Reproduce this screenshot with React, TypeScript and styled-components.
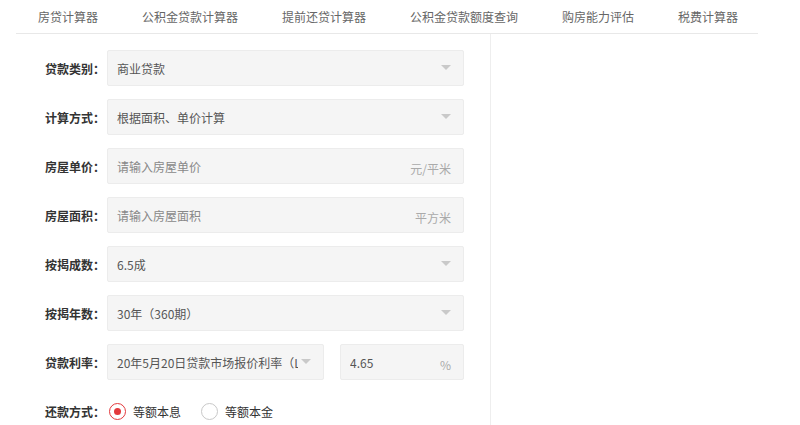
import styled, { createGlobalStyle } from "styled-components";

const GlobalStyle = createGlobalStyle`
  html, body {
    margin: 0;
    padding: 0;
    background: #fff;
    font-family: "Noto Sans CJK SC", "Noto Sans", sans-serif;
    font-size: 12px;
  }
`;

const tabs = [
  "房贷计算器",
  "公积金贷款计算器",
  "提前还贷计算器",
  "公积金贷款额度查询",
  "购房能力评估",
  "税费计算器",
];

type Field =
  | { kind: "select"; label: string; value: string }
  | { kind: "input"; label: string; placeholder: string; unit: string };

const fields: Field[] = [
  { kind: "select", label: "贷款类别：", value: "商业贷款" },
  { kind: "select", label: "计算方式：", value: "根据面积、单价计算" },
  { kind: "input", label: "房屋单价：", placeholder: "请输入房屋单价", unit: "元/平米" },
  { kind: "input", label: "房屋面积：", placeholder: "请输入房屋面积", unit: "平方米" },
  { kind: "select", label: "按揭成数：", value: "6.5成" },
  { kind: "select", label: "按揭年数：", value: "30年（360期）" },
];

const Arrow = () => (
  <ArrowIcon viewBox="0 0 10 6">
    <path d="M0 0 L10 0 L5 5 Z" fill="#c9c9c9" />
  </ArrowIcon>
);

const App = () => {
  return (
    <>
      <GlobalStyle />
      <Page>
        <TabBar>
          {tabs.map((t) => (
            <Tab key={t}>{t}</Tab>
          ))}
        </TabBar>
        <Body>
          <FormColumn>
            {fields.map((f) => (
              <Row key={f.label}>
                <Label>{f.label}</Label>
                {f.kind === "select" ? (
                  <Box>
                    <BoxText>{f.value}</BoxText>
                    <Arrow />
                  </Box>
                ) : (
                  <Box>
                    <BoxText $muted>{f.placeholder}</BoxText>
                    <Unit>{f.unit}</Unit>
                  </Box>
                )}
              </Row>
            ))}
            <Row>
              <Label>贷款利率：</Label>
              <Box $width={217}>
                <BoxText>20年5月20日贷款市场报价利率（LPR）</BoxText>
                <Arrow />
              </Box>
              <Box $width={124} $gap={16}>
                <BoxText>4.65</BoxText>
                <Unit>%</Unit>
              </Box>
            </Row>
            <Row>
              <Label>还款方式：</Label>
              <RadioGroup>
                <RadioItem>
                  <RadioCircle $checked />
                  <span>等额本息</span>
                </RadioItem>
                <RadioItem>
                  <RadioCircle />
                  <span>等额本金</span>
                </RadioItem>
              </RadioGroup>
            </Row>
          </FormColumn>
          <ResultColumn />
        </Body>
      </Page>
    </>
  );
};

const Page = styled.div`
  width: 800px;
  height: 425px;
  overflow: hidden;
`;

const TabBar = styled.div`
  display: flex;
  margin: 0 42px 0 16px;
  height: 33px;
  border-bottom: 1px solid #e8e8e8;
`;

const Tab = styled.div`
  padding: 0 22px;
  line-height: 33px;
  color: #666;
  font-size: 12px;
  white-space: nowrap;
`;

const Body = styled.div`
  display: flex;
  margin-left: 16px;
`;

const FormColumn = styled.div`
  width: 474px;
  border-right: 1px solid #eee;
  padding-top: 16px;
  display: flex;
  flex-direction: column;
  gap: 13px;
  height: 400px;
`;

const ResultColumn = styled.div`
  flex: 1;
`;

const Row = styled.div`
  display: flex;
  align-items: center;
  height: 36px;
`;

const Label = styled.div`
  width: 89px;
  margin-right: 2px;
  text-align: right;
  font-weight: bold;
  color: #333;
  white-space: nowrap;
`;

const Box = styled.div<{ $width?: number; $gap?: number }>`
  box-sizing: border-box;
  width: ${(p) => p.$width ?? 357}px;
  margin-left: ${(p) => p.$gap ?? 0}px;
  height: 36px;
  background: #f5f5f5;
  border: 1px solid #ececec;
  border-radius: 2px;
  display: flex;
  align-items: center;
  padding: 0 9px 0 9px;
  gap: 3px;
`;

const BoxText = styled.div<{ $muted?: boolean }>`
  flex: 1;
  overflow: hidden;
  white-space: nowrap;
  text-overflow: clip;
  color: ${(p) => (p.$muted ? "#888" : "#555")};
`;

const Unit = styled.span`
  color: #aaa;
  margin-top: 4px;
  padding-right: 3px;
`;

const ArrowIcon = styled.svg`
  width: 10px;
  height: 6px;
  flex: none;
  margin-right: 3px;
`;

const RadioGroup = styled.div`
  display: flex;
  align-items: center;
  gap: 20px;
  margin-left: 2px;
  color: #333;
`;

const RadioItem = styled.label`
  display: flex;
  align-items: center;
  gap: 7px;
`;

const RadioCircle = styled.span<{ $checked?: boolean }>`
  box-sizing: border-box;
  width: 17px;
  height: 17px;
  border-radius: 50%;
  border: 1px solid ${(p) => (p.$checked ? "#e3393c" : "#c8c8c8")};
  display: flex;
  align-items: center;
  justify-content: center;
  &::after {
    content: "";
    width: 7px;
    height: 7px;
    border-radius: 50%;
    background: ${(p) => (p.$checked ? "#e3393c" : "transparent")};
  }
`;

export default App;
